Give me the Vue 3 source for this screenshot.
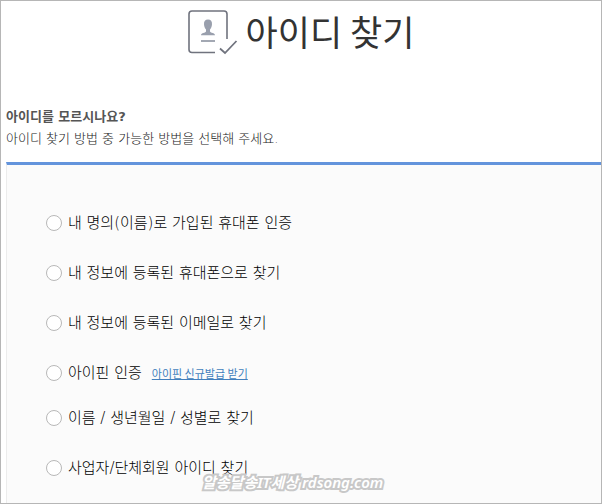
<script setup>
import { ref } from 'vue'

const selected = ref('')
const methods = [
  { id: 'own-phone', label: '내 명의(이름)로 가입된 휴대폰 인증' },
  { id: 'saved-phone', label: '내 정보에 등록된 휴대폰으로 찾기' },
  { id: 'saved-email', label: '내 정보에 등록된 이메일로 찾기' },
  { id: 'ipin', label: '아이핀 인증', link: '아이핀 신규발급 받기' },
  { id: 'birth', label: '이름 / 생년월일 / 성별로 찾기' },
  { id: 'business', label: '사업자/단체회원 아이디 찾기' }
]
</script>

<template>
  <main class="page">
    <header class="header">
      <svg class="logo" width="50" height="46" viewBox="0 0 50 46" fill="none" aria-hidden="true">
        <path d="M27 42.500H4Q1 42.500 1 39.500V4Q1 1 4 1H36Q39 1 39 4V29" stroke="#70737e" stroke-width="1.600" />
        <path d="M20 9.500c-2.800 0-4.200 2-4 4.800.1 2.200.9 4 2 5.200v2c-.8 1.800-4.700.8-5 3.800h14c-.3-3-4.200-2-5-3.800v-2c1.100-1.200 1.900-3 2-5.200.2-2.800-1.200-4.800-4-4.800z" fill="#999fad" />
        <path d="M13 31H27" stroke="#a3a8b3" stroke-width="2" />
        <path d="M32 38.500L37 43L48.500 31" stroke="#70737e" stroke-width="1.800" />
      </svg>
      <h1 class="title">아이디 찾기</h1>
    </header>

    <section class="intro">
      <h2 class="question">아이디를 모르시나요?</h2>
      <p class="hint">아이디 찾기 방법 중 가능한 방법을 선택해 주세요.</p>
    </section>

    <form class="panel">
      <div v-for="m in methods" :key="m.id" class="row" :class="{ linked: m.link }">
        <input :id="m.id" v-model="selected" class="radio" type="radio" name="method" :value="m.id" />
        <label class="label" :for="m.id">{{ m.label }}</label>
        <a v-if="m.link" class="link" href="#">{{ m.link }}</a>
      </div>
    </form>

    <div class="watermark">알송달송IT세상 rdsong.com</div>
  </main>
</template>

<style>
body {
  margin: 0;
}
</style>

<style scoped>
.page {
  position: relative;
  box-sizing: border-box;
  min-height: 100vh;
  display: flex;
  flex-direction: column;
  border: 1px solid #b6b6b6;
  background: #fff;
  font-family: "DejaVu Sans", "Noto Sans CJK KR", sans-serif;
}
.header {
  display: flex;
  justify-content: center;
  align-items: flex-end;
  gap: 8px;
  padding-top: 5px;
}
.logo {
  flex: none;
}
.title {
  margin: 0;
  font: 400 35px/50px "Noto Sans CJK KR", sans-serif;
  color: #333;
}
.intro {
  padding: 50px 5px 12px;
  line-height: 22px;
  color: #555;
}
.question,
.hint {
  margin: 0;
  font-size: 13px;
}
.question {
  font-weight: 700;
}
.hint {
  font-weight: 300;
  color: #222;
}
.panel {
  flex: 1;
  margin-left: 5px;
  padding: 46px 20px 22px 39px;
  border-top: 3px solid #6394dc;
  border-left: 1px solid #ececec;
  background: #fbfbfb;
}
.row {
  display: flex;
  align-items: center;
  height: 24px;
  margin-bottom: 26px;
}
.row.linked {
  margin-bottom: 21px;
}
.row:last-child {
  margin-bottom: 0;
}
.radio {
  appearance: none;
  flex: none;
  box-sizing: border-box;
  width: 16px;
  height: 16px;
  margin: 0 6px 0 0;
  border: 1px solid #b8b8b8;
  border-radius: 50%;
  background: #fff;
}
.radio:checked {
  border: 5px solid #6394dc;
}
.label {
  font-size: 15px;
  font-weight: 300;
  line-height: 24px;
  color: #000;
}
.link {
  margin-left: 10px;
  font: 400 11px/24px "Noto Sans CJK KR", sans-serif;
  color: #427fbd;
  text-decoration: underline;
}
.watermark {
  position: absolute;
  left: 201px;
  bottom: 11px;
  font: italic 600 15px/20px "Noto Sans", "Noto Sans CJK KR", sans-serif;
  color: #fff;
  white-space: nowrap;
  pointer-events: none;
  -webkit-text-stroke: 4px #c8c8c8;
  paint-order: stroke fill;
}
</style>
